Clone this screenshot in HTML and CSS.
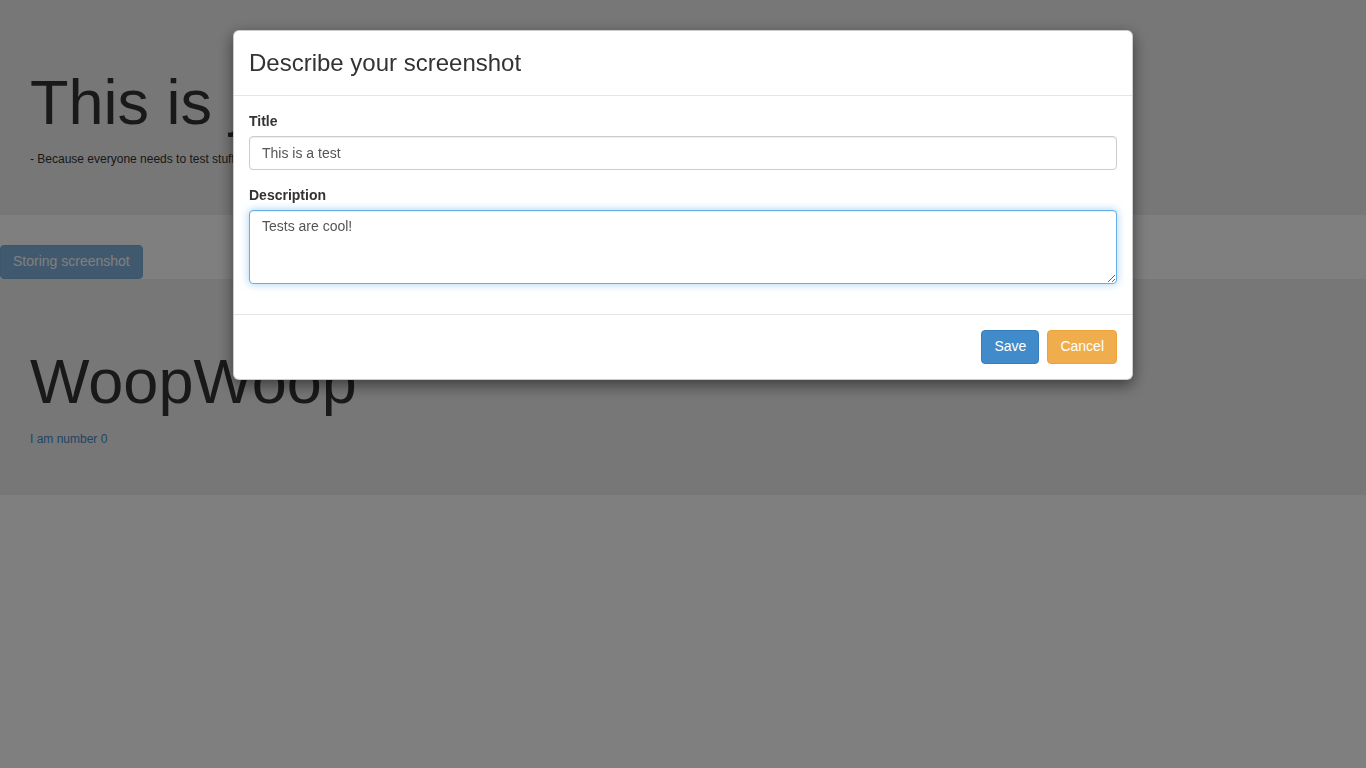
FILE: index.html
```html
<!DOCTYPE html>
<html lang="en">
<head>
    <meta charset="UTF-8">
    <meta name="viewport" content="width=device-width, initial-scale=1.0">
    <title>Screenshot test</title>
    <link rel="stylesheet" href="styles.css">
</head>
<body>
    <div class="jumbotron">
        <h1>This is just a test page</h1>
        <p class="lead-small">- Because everyone needs to test stuff</p>
    </div>

    <div class="toolbar">
        <button class="btn btn-primary" disabled>Storing screenshot</button>
    </div>

    <div class="jumbotron">
        <h1>WoopWoop</h1>
        <p class="lead-small"><a href="#">I am number 0</a></p>
    </div>

    <!-- modal -->
    <div class="modal-backdrop"></div>
    <div class="modal">
        <div class="modal-dialog">
            <div class="modal-content">
                <div class="modal-header">
                    <h4 class="modal-title">Describe your screenshot</h4>
                </div>
                <div class="modal-body">
                    <div class="form-group">
                        <label for="shotTitle">Title</label>
                        <input id="shotTitle" class="form-control" type="text" value="This is a test">
                    </div>
                    <div class="form-group">
                        <label for="shotDesc">Description</label>
                        <textarea id="shotDesc" class="form-control" rows="3">Tests are cool!</textarea>
                    </div>
                </div>
                <div class="modal-footer">
                    <button class="btn btn-primary">Save</button>
                    <button class="btn btn-warning">Cancel</button>
                </div>
            </div>
        </div>
    </div>

    <script>
        // put the cursor at the end of the description
        var desc = document.getElementById('shotDesc');
        desc.focus();
        desc.setSelectionRange(desc.value.length, desc.value.length);
    </script>
</body>
</html>
```

FILE: styles.css
```css
* {
    box-sizing: border-box;
}
body {
    margin: 0;
    font-family: "Helvetica Neue", Helvetica, "Liberation Sans", Arial, sans-serif;
    font-size: 14px;
    line-height: 1.42857;
    color: #333;
    background-color: #fff;
}
a {
    color: #428bca;
    text-decoration: none;
}
.jumbotron {
    background-color: #eee;
    padding: 48px 30px 47px;
    overflow: hidden;
    white-space: nowrap;
}
.jumbotron h1 {
    font-size: 63px;
    font-weight: 500;
    line-height: 1.1;
    margin: 20px 0 14px;
}
.lead-small {
    font-size: 12px;
    margin: 0;
}
.toolbar {
    margin-top: 30px;
    font-size: 0;
}
.btn {
    display: inline-block;
    padding: 6px 12px;
    font-family: inherit;
    font-size: 14px;
    line-height: 1.42857;
    border: 1px solid transparent;
    border-radius: 4px;
    color: #fff;
    cursor: pointer;
}
.btn[disabled] {
    opacity: .65;
    cursor: not-allowed;
}
.btn-primary {
    background-color: #428bca;
    border-color: #357ebd;
}
.btn-warning {
    background-color: #f0ad4e;
    border-color: #eea236;
}
.modal-backdrop {
    position: fixed;
    inset: 0;
    background-color: #000;
    opacity: .5;
}
.modal {
    position: fixed;
    inset: 0;
}
.modal-dialog {
    width: 900px;
    margin: 30px auto;
}
.modal-content {
    background-color: #fff;
    border: 1px solid rgba(0,0,0,.2);
    border-radius: 6px;
    box-shadow: 0 5px 15px rgba(0,0,0,.5);
}
.modal-header {
    padding: 15px;
    border-bottom: 1px solid #e5e5e5;
}
.modal-title {
    margin: 0;
    font-size: 24px;
    font-weight: 500;
    line-height: 1.42857;
}
.modal-body {
    padding: 15px;
}
.form-group {
    margin-bottom: 15px;
}
.form-group label {
    display: inline-block;
    padding-top: 1px;
    margin-bottom: 4px;
    font-weight: bold;
}
.form-control {
    display: block;
    width: 100%;
    padding: 6px 12px;
    font-family: inherit;
    font-size: 14px;
    line-height: 1.42857;
    color: #555;
    background-color: #fff;
    border: 1px solid #ccc;
    border-radius: 4px;
    box-shadow: inset 0 1px 1px rgba(0,0,0,.075);
}
input.form-control {
    height: 34px;
}
textarea.form-control {
    height: 74px;
    resize: vertical;
}
.form-control:focus {
    border-color: #66afe9;
    outline: 0;
    box-shadow: inset 0 1px 1px rgba(0,0,0,.075), 0 0 8px rgba(102,175,233,.6);
}
.modal-footer {
    padding: 15px;
    border-top: 1px solid #e5e5e5;
    display: flex;
    justify-content: flex-end;
    gap: 8px;
}
```
